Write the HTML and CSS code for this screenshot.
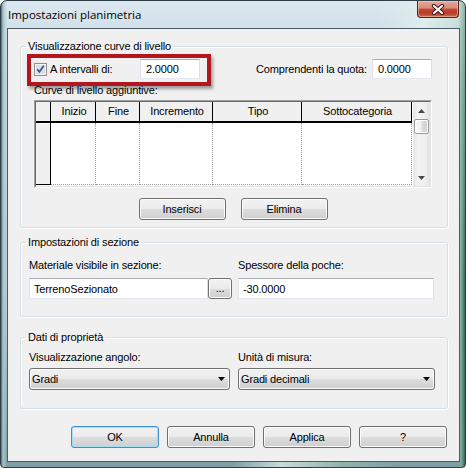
FILE: index.html
```html
<!DOCTYPE html>
<html lang="it">
<head>
<meta charset="utf-8">
<title>Impostazioni planimetria</title>
<link rel="stylesheet" href="styles.css">
</head>
<body>
<div class="window">
  <div class="titlebar">
    <span class="title">Impostazioni planimetria</span>
    <button class="close" aria-label="Chiudi">
      <svg width="14" height="11" viewBox="0 0 14 11">
        <path d="M3 2 L11 9 M11 2 L3 9" stroke="#3b1612" stroke-width="4.2" stroke-linecap="round" fill="none"/>
        <path d="M3 2 L11 9 M11 2 L3 9" stroke="#fff" stroke-width="2.2" stroke-linecap="round" fill="none"/>
      </svg>
    </button>
  </div>
  <div class="client">
    <fieldset class="group">
      <legend>Visualizzazione curve di livello</legend>
      <div class="gbody g1">
        <div class="row1">
          <span class="cb">
            <svg width="13" height="13" viewBox="0 0 13 13">
              <rect x="0.5" y="0.5" width="12" height="12" fill="#f4f4f4" stroke="#8e8f8f"/>
              <rect x="2" y="2" width="9" height="9" fill="#dcdfe3"/>
              <path d="M3.2 6.3 L5.4 8.8 L9.8 2.8" stroke="#3d5690" stroke-width="1.7" fill="none"/>
            </svg>
          </span>
          <span class="lbl-check">A intervalli di:</span>
          <input class="tb num" type="text" value="2.0000" readonly>
          <span class="fill"></span>
          <span class="lbl-quota">Comprendenti la quota:</span>
          <input class="tb num" type="text" value="0.0000" readonly>
          <div class="highlight"></div>
        </div>
        <div class="sublabel">Curve di livello aggiuntive:</div>
        <div class="grid">
          <div class="grid-in">
            <div class="grid-body">
              <table>
                <colgroup>
                  <col class="c0"><col class="c1"><col class="c2"><col class="c3"><col class="c4"><col class="c5">
                </colgroup>
                <thead>
                  <tr><th></th><th>Inizio</th><th>Fine</th><th>Incremento</th><th>Tipo</th><th>Sottocategoria</th></tr>
                </thead>
                <tbody>
                  <tr><td class="rh"></td><td></td><td></td><td></td><td></td><td></td></tr>
                </tbody>
              </table>
            </div>
            <div class="vscroll">
              <span class="arr">
                <svg width="7" height="4" viewBox="0 0 7 4"><path d="M0 4 L3.5 0 L7 4 Z" fill="#4a4a4a"/></svg>
              </span>
              <span class="thumb"></span>
              <span class="track"></span>
              <span class="arr">
                <svg width="7" height="4" viewBox="0 0 7 4"><path d="M0 0 L7 0 L3.5 4 Z" fill="#4a4a4a"/></svg>
              </span>
            </div>
          </div>
        </div>
        <div class="btnrow center">
          <button class="btn w87">Inserisci</button>
          <button class="btn w87">Elimina</button>
        </div>
      </div>
    </fieldset>

    <fieldset class="group g2wrap">
      <legend>Impostazioni di sezione</legend>
      <div class="gbody g2">
        <span class="lbl">Materiale visibile in sezione:</span>
        <span class="lbl">Spessore della poche:</span>
        <div class="browse">
          <input class="tb wide" type="text" value="TerrenoSezionato" readonly>
          <button class="btn dots">...</button>
        </div>
        <input class="tb wide" type="text" value="-30.0000" readonly>
      </div>
    </fieldset>

    <fieldset class="group g3wrap">
      <legend>Dati di proprietà</legend>
      <div class="gbody g3">
        <span class="lbl">Visualizzazione angolo:</span>
        <span class="lbl">Unità di misura:</span>
        <div class="combo">
          <span>Gradi</span>
          <svg width="7" height="4" viewBox="0 0 7 4"><path d="M0 0 L7 0 L3.5 4 Z" fill="#000"/></svg>
        </div>
        <div class="combo">
          <span>Gradi decimali</span>
          <svg width="7" height="4" viewBox="0 0 7 4"><path d="M0 0 L7 0 L3.5 4 Z" fill="#000"/></svg>
        </div>
      </div>
    </fieldset>

    <div class="btnrow footer">
      <button class="btn w88 default">OK</button>
      <button class="btn w88">Annulla</button>
      <button class="btn w88">Applica</button>
      <button class="btn w88">?</button>
    </div>
  </div>
</div>
</body>
</html>
```

FILE: styles.css
```css
* { box-sizing: border-box; }
html, body { margin: 0; padding: 0; }
body {
  width: 466px;
  height: 468px;
  overflow: hidden;
  background: #ffffff;
  font-family: "Liberation Sans", Arial, sans-serif;
  font-size: 11px;
  letter-spacing: -0.15px;
  color: #000;
}

/* ---------- window frame ---------- */
.window {
  width: 466px;
  height: 468px;
  border: 1px solid #2f3f47;
  border-radius: 7px 7px 4px 4px;
  padding: 0 5px 5px 6px;
  display: flex;
  flex-direction: column;
  background:
    linear-gradient(108deg, rgba(255,255,255,0) 62%, rgba(226,240,236,0.75) 70%, rgba(160,196,178,0.55) 80%, rgba(255,255,255,0) 90%),
    linear-gradient(to right, #3f6c66 0, #aac4cc 2px, rgba(0,0,0,0) 6px, rgba(0,0,0,0) calc(100% - 7px), #7fae9f calc(100% - 4px), #2f6659 100%),
    linear-gradient(to bottom, #dce8f0 0, #cbdce6 40px, #b4cbd5 300px, #7d9ca3 100%);
}
.titlebar {
  flex: none;
  height: 27px;
  display: flex;
  justify-content: space-between;
  align-items: flex-start;
}
.title {
  margin: 6px 0 0 1px;
  font-family: "Open Sans", "Liberation Sans", sans-serif;
  font-size: 11.5px;
  line-height: 16px;
  letter-spacing: 0;
  color: #000;
}
.close {
  width: 42px;
  height: 17px;
  margin: 0 1px 0 0;
  padding: 0;
  border: 1px solid #5a211b;
  border-top: none;
  border-radius: 0 0 4px 4px;
  background: linear-gradient(to bottom, #e8a89d 0, #d78a7c 45%, #c24a38 50%, #b93c2a 75%, #d06a4f 100%);
  box-shadow: inset 0 0 0 1px rgba(255,220,210,0.45);
  display: flex;
  align-items: center;
  justify-content: center;
}

.client {
  flex: 1;
  background: #f0f0f0;
  border: 1px solid #4c5c66;
  padding: 11px 11px 0 12px;
}

/* ---------- group boxes ---------- */
.group {
  margin: 0;
  padding: 0;
  min-width: 0;
  border: 1px solid #d5dfe5;
  border-radius: 3px;
  box-shadow: 1px 1px 0 #ffffff, inset 1px 1px 0 #ffffff;
}
.group legend {
  margin-left: 5px;
  padding: 0 2px;
  line-height: 13px;
}
.g2wrap { margin-top: 8px; }
.g3wrap { margin-top: 14px; }

.gbody.g1 { padding: 6px 15px 7px 13px; }

.row1 {
  position: relative;
  height: 20px;
  display: flex;
  align-items: center;
}
.cb { width: 13px; height: 13px; display: block; flex: none; }
.cb svg { display: block; }
.lbl-check { margin-left: 3px; width: 90px; flex: none; line-height: 13px; }
.fill { flex: 1; }
.lbl-quota { margin-right: 5px; line-height: 13px; }

.tb {
  height: 20px;
  margin: 0;
  border: 1px solid;
  border-color: #abadb3 #dbdfe6 #e3e9ef #e2e3ea;
  background: #fff;
  padding: 0 4px;
  font: inherit;
  letter-spacing: inherit;
  color: #000;
  outline: none;
}
.tb.num { width: 60px; flex: none; padding-left: 5px; }

.highlight {
  position: absolute;
  left: -7px;
  top: -5px;
  width: 184px;
  height: 32px;
  border: 4px solid #b3161d;
  box-shadow: 2px 3px 3px rgba(0,0,0,0.35);
  pointer-events: none;
}

.sublabel { margin-top: 5px; line-height: 13px; }

/* ---------- grid ---------- */
.grid {
  margin-top: 3px;
  height: 88px;
  border: 1px solid;
  border-color: #a0a0a0 #ffffff #ffffff #a0a0a0;
}
.grid-in {
  height: 100%;
  border: 1px solid;
  border-color: #696969 #e3e3e3 #e3e3e3 #696969;
  background: #fff;
  display: flex;
}
.grid-body { width: 377px; flex: none; }
table {
  width: 376px;
  border-collapse: separate;
  border-spacing: 0;
  table-layout: fixed;
}
col.c0 { width: 15px; }
col.c1 { width: 45px; }
col.c2 { width: 44px; }
col.c3 { width: 73px; }
col.c4 { width: 89px; }
col.c5 { width: 110px; }
th {
  height: 21px;
  padding: 0 0 0 2px;
  background: #f0f0f0;
  border-right: 1px solid #000;
  border-bottom: 2px solid #000;
  font-weight: normal;
  text-align: center;
  line-height: 13px;
}
td {
  height: 62px;
  padding: 0;
  border-right: 1px dotted #9c9c9c;
  border-bottom: 1px dotted #9c9c9c;
}
td.rh {
  background: #f0f0f0;
  border-right: 1px solid #000;
  border-bottom: 1px solid #000;
  box-shadow: inset 0 1px 0 #ffffff;
}
.vscroll {
  width: 17px;
  flex: none;
  display: flex;
  flex-direction: column;
  background: linear-gradient(to right, #e6e6e6, #f3f3f3 30%, #efefef 70%, #e2e2e2);
}
.arr {
  height: 17px;
  flex: none;
  display: flex;
  align-items: center;
  justify-content: center;
}
.arr svg { display: block; }
.thumb {
  height: 15px;
  margin: 0 1px 0 1px;
  flex: none;
  border: 1px solid #9a9a9a;
  border-radius: 2px;
  background: linear-gradient(to right, #fbfbfb 0, #f0f0f0 45%, #dcdcdc 55%, #cfcfcf 100%);
  box-shadow: inset 0 0 0 1px #ffffff;
}
.track { flex: 1; }

/* ---------- buttons ---------- */
.btnrow { display: flex; }
.btnrow.center { justify-content: center; gap: 15px; margin-top: 10px; }
.btnrow.footer { justify-content: flex-end; gap: 8px; margin: 17px 1px 0 0; }
.btn {
  height: 22px;
  margin: 0;
  padding: 0;
  border: 1px solid #707070;
  border-radius: 3px;
  background: linear-gradient(to bottom, #f2f2f2 0, #ebebeb 50%, #dddddd 50%, #cfcfcf 100%);
  box-shadow: inset 0 0 0 1px #fcfcfc;
  font: inherit;
  letter-spacing: inherit;
  color: #000;
  line-height: 13px;
}
.btn.w87 { width: 87px; }
.btn.w88 { width: 88px; }
.btn.default {
  border-color: #3c8fd0;
  box-shadow: inset 0 0 0 1px #a6def8;
}

/* ---------- sezione ---------- */
.gbody.g2 {
  padding: 10px 13px 17px 8px;
  display: grid;
  grid-template-columns: 203px 196px;
  column-gap: 6px;
  row-gap: 6px;
}
.lbl { line-height: 13px; }
.browse { display: flex; }
.browse .tb { flex: 1; min-width: 0; }
.tb.wide { height: 21px; width: 100%; }
.btn.dots { width: 24px; height: 21px; flex: none; }

/* ---------- proprietà ---------- */
.gbody.g3 {
  padding: 7px 12px 18px 8px;
  display: grid;
  grid-template-columns: 201px 197px;
  column-gap: 8px;
  row-gap: 4px;
}
.combo {
  height: 22px;
  border: 1px solid #707070;
  border-radius: 3px;
  background: linear-gradient(to bottom, #f2f2f2 0, #ebebeb 50%, #dddddd 50%, #cfcfcf 100%);
  box-shadow: inset 0 0 0 1px #fcfcfc;
  display: flex;
  align-items: center;
  justify-content: space-between;
  padding: 0 4px 0 2px;
  line-height: 13px;
}
.combo svg { display: block; }
```
